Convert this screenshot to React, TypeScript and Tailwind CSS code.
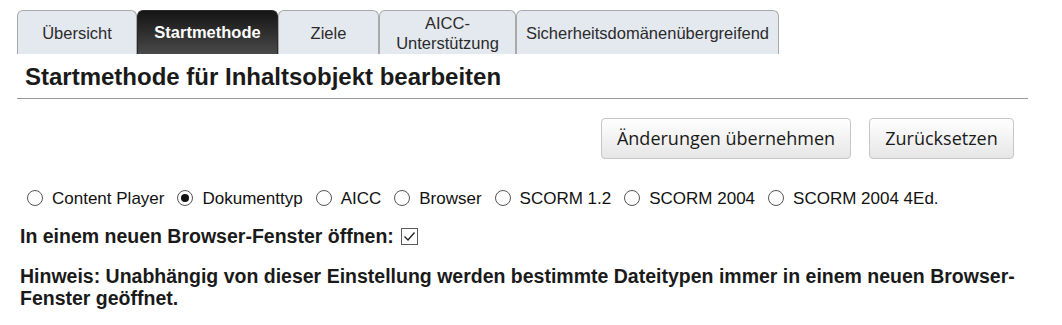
import { useState } from 'react';

const tabs = [
  { label: 'Übersicht', width: 'w-[120px]' },
  { label: 'Startmethode', width: 'w-[141px]' },
  { label: 'Ziele', width: 'w-[101px]' },
  { label: 'AICC-\nUnterstützung', width: 'w-[137px]' },
  { label: 'Sicherheitsdomänenübergreifend', width: 'w-[263px]' },
];

const methods = [
  'Content Player',
  'Dokumenttyp',
  'AICC',
  'Browser',
  'SCORM 1.2',
  'SCORM 2004',
  'SCORM 2004 4Ed.',
];

function Radio({ checked }: { checked: boolean }) {
  return (
    <span className="flex h-[16px] w-[16px] shrink-0 items-center justify-center rounded-full border border-[#555] bg-white">
      {checked && <span className="h-[8px] w-[8px] rounded-full bg-[#111]" />}
    </span>
  );
}

export default function App() {
  const [active] = useState(1);
  const [method, setMethod] = useState('Dokumenttyp');
  const [newWindow, setNewWindow] = useState(true);

  return (
    <div className="min-h-[325px] bg-white pt-[10px] font-['Liberation_Sans',Arial,sans-serif] text-[#1a1a1a]">
      <div className="flex pl-[17px]">
        {tabs.map((t, i) => (
          <div
            key={t.label}
            className={
              i === active
                ? `${t.width} flex h-[44px] items-center justify-center rounded-t-[6px] border border-b-0 border-[#2a2a2a] bg-gradient-to-b from-[#151515] to-[#4a4a4a] text-[16.5px] font-bold text-white`
                : `${t.width} flex h-[44px] items-center justify-center rounded-t-[6px] border border-b-0 border-[#a9a9a9] bg-[#e4e8ef] text-center text-[16.5px] leading-[20px] whitespace-pre-line text-[#2b2b2b]`
            }
          >
            {t.label}
          </div>
        ))}
      </div>

      <div className="ml-[17px] mr-[34px] border-b border-[#9a9a9a] pb-[7px] pl-[8px] pt-[9px]">
        <h1 className="text-[24px] font-bold leading-[28px] text-[#1a1a1a]">
          Startmethode für Inhaltsobjekt bearbeiten
        </h1>
      </div>

      <div className="mr-[48px] mt-[19px] flex justify-end gap-[18px] font-['Open_Sans',sans-serif] text-[18px] text-[#1a1a1a]">
        <button
          type="button"
          className="h-[41px] w-[250px] rounded-[4px] border border-[#c6c6c6] bg-gradient-to-b from-white to-[#e6e6e6]"
        >
          Änderungen übernehmen
        </button>
        <button
          type="button"
          className="h-[41px] w-[145px] rounded-[4px] border border-[#c6c6c6] bg-gradient-to-b from-white to-[#e6e6e6]"
        >
          Zurücksetzen
        </button>
      </div>

      <div className="ml-[27px] mt-[27px] flex items-center gap-[13px] text-[17px] leading-[20px] text-[#111]">
        {methods.map((m) => (
          <label key={m} className="flex items-center gap-[9px]" onClick={() => setMethod(m)}>
            <Radio checked={method === m} />
            <span className="pt-[3px]">{m}</span>
          </label>
        ))}
      </div>

      <div className="ml-[20px] mt-[16px] flex items-center gap-[7px] text-[19.5px] font-bold leading-[22px] text-[#1a1a1a]">
        <span>In einem neuen Browser-Fenster öffnen:</span>
        <span
          className="flex h-[17px] w-[17px] items-center justify-center border border-[#5a5a5a] bg-white"
          onClick={() => setNewWindow(!newWindow)}
        >
          {newWindow && (
            <svg width="13" height="11" viewBox="0 0 13 11" fill="none">
              <path d="M1.5 5.5 L5 9 L11.5 1.5" stroke="#222" strokeWidth="1.3" />
            </svg>
          )}
        </span>
      </div>

      <p className="ml-[20px] mr-[30px] mt-[18px] text-[19.5px] font-bold leading-[22px] text-[#1a1a1a]">
        Hinweis: Unabhängig von dieser Einstellung werden bestimmte Dateitypen immer in einem neuen Browser-Fenster geöffnet.
      </p>
    </div>
  );
}
